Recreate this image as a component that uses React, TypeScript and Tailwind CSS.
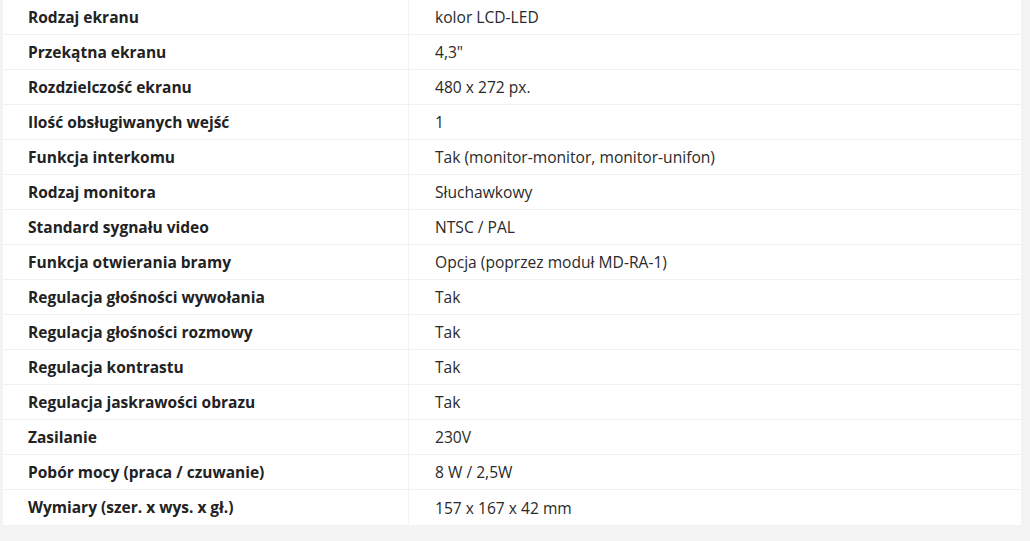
import React from "react";

const rows: [string, string][] = [
  ["Rodzaj ekranu", "kolor LCD-LED"],
  ["Przekątna ekranu", "4,3\""],
  ["Rozdzielczość ekranu", "480 x 272 px."],
  ["Ilość obsługiwanych wejść", "1"],
  ["Funkcja interkomu", "Tak (monitor-monitor, monitor-unifon)"],
  ["Rodzaj monitora", "Słuchawkowy"],
  ["Standard sygnału video", "NTSC / PAL"],
  ["Funkcja otwierania bramy", "Opcja (poprzez moduł MD-RA-1)"],
  ["Regulacja głośności wywołania", "Tak"],
  ["Regulacja głośności rozmowy", "Tak"],
  ["Regulacja kontrastu", "Tak"],
  ["Regulacja jaskrawości obrazu", "Tak"],
  ["Zasilanie", "230V"],
  ["Pobór mocy (praca / czuwanie)", "8 W / 2,5W"],
  ["Wymiary (szer. x wys. x gł.)", "157 x 167 x 42 mm"],
];

export default function App() {
  return (
    <div className="w-[1030px] h-[541px] bg-[#f4f4f4] overflow-hidden" style={{ fontFamily: '"Open Sans", "Noto Sans", sans-serif' }}>
      <div className="ml-[3px] w-[1018px] bg-white">
        {rows.map(([k, v], i) => (
          <div key={i} className={`flex h-[35px] items-center ${i < rows.length - 1 ? "border-b border-[#f1f1f1]" : ""}`}>
            <div className="w-[406px] h-full flex items-center pl-[25px] pt-[1px] border-r border-[#f3f3f3] text-[15.5px] font-bold text-[#222]">{k}</div>
            <div className="pl-[26px] pt-[2px] text-[15.6px] text-[#2a2a2a]">{v}</div>
          </div>
        ))}
      </div>
    </div>
  );
}
